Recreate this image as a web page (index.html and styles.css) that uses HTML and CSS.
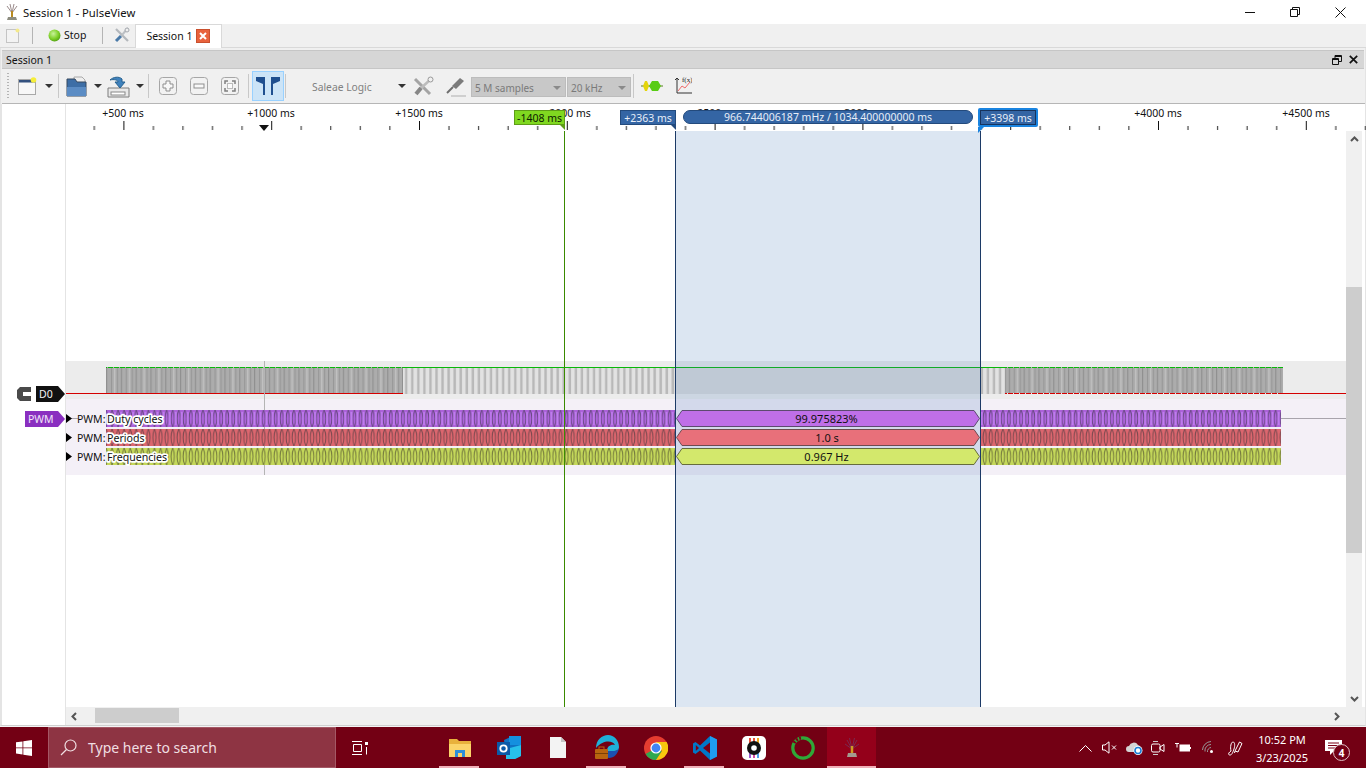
FILE: index.html
```html
<!DOCTYPE html>
<html lang="en">
<head>
<meta charset="utf-8">
<title>Session 1 - PulseView</title>
<link rel="stylesheet" href="styles.css">
</head>
<body>
<svg class="defs" width="0" height="0" aria-hidden="true">
  <defs>
    <pattern id="ticks" x="-24.4" y="0" width="147.8" height="27" patternUnits="userSpaceOnUse">
      <path d="M.5 17v9" stroke="#111" fill="none"/>
      <path d="M30 22v4M59.6 22v4M89.1 22v4M118.7 22v4" stroke="#222" fill="none"/>
    </pattern>
    <pattern id="dense" x="106" y="367" width="14.8" height="27" patternUnits="userSpaceOnUse">
      <rect width="14.8" height="27" fill="#acacac"/>
      <rect x="0" width="1.2" height="27" fill="#909090"/>
      <rect x="5" width="1" height="27" fill="#969696"/>
      <rect x="8" width="1.2" height="27" fill="#c4c4c4"/>
      <rect x="11" width="1" height="27" fill="#969696"/>
    </pattern>
    <pattern id="sparse" x="403" y="367" width="6.06" height="27" patternUnits="userSpaceOnUse">
      <rect width="6.06" height="27" fill="#e2e2e2"/>
      <rect x="2" width="2.4" height="27" fill="#b8b8b8"/>
    </pattern>
    <pattern id="topDash" x="0" y="0" width="6" height="1" patternUnits="userSpaceOnUse">
      <rect width="5" height="1" fill="#08b808"/>
    </pattern>
    <pattern id="botDash" x="0" y="0" width="6" height="1" patternUnits="userSpaceOnUse">
      <rect width="5" height="1" fill="#d40000"/>
    </pattern>
    <pattern id="annoP" x="106" y="410" width="6.06" height="17" patternUnits="userSpaceOnUse">
      <rect width="6.06" height="17" fill="#ac62da"/>
      <path d="M0 0C2.200 4 2.200 13 0 17M6.060 0C3.900 4 3.900 13 6.060 17" fill="none" stroke="#6b4a86"/>
      <path d="M2 8.500h2" stroke="#c07cf0" stroke-width="13"/>
    </pattern>
    <pattern id="annoR" x="106" y="429" width="6.06" height="17" patternUnits="userSpaceOnUse">
      <rect width="6.06" height="17" fill="#dc666e"/>
      <path d="M0 0C2.200 4 2.200 13 0 17M6.060 0C3.900 4 3.900 13 6.060 17" fill="none" stroke="#7f4a50"/>
    </pattern>
    <pattern id="annoY" x="106" y="448" width="6.06" height="17" patternUnits="userSpaceOnUse">
      <rect width="6.06" height="17" fill="#c4d85a"/>
      <path d="M0 0C2.200 4 2.200 13 0 17M6.060 0C3.900 4 3.900 13 6.060 17" fill="none" stroke="#767c3e"/>
    </pattern>
  </defs>
</svg>

<header class="titlebar">
  <svg class="app-icon" width="14" height="18" viewBox="0 0 14 18"><path d="M7 10 2 3M7 10 5 1M7 10 9 1M7 10l5-7" stroke="#9a8a8a" fill="none"/><path d="M7 8v6" stroke="#b88a20" stroke-width="2"/><path d="M3 14h8l1 3H2z" fill="#8d8d80"/></svg>
  <span class="title-text">Session 1 - PulseView</span>
  <div class="win-controls">
    <svg width="10" height="10" viewBox="0 0 10 10"><path d="M0 5.500h10" stroke="#111" fill="none"/></svg>
    <svg width="10" height="10" viewBox="0 0 10 10"><path d="M.5 2.500h7v7h-7zM2.500 2.500v-2h7v7h-2" stroke="#111" fill="none"/></svg>
    <svg width="11" height="11" viewBox="0 0 11 11"><path d="M.5.5l10 10M10.500.5l-10 10" stroke="#111" fill="none"/></svg>
  </div>
</header>

<nav class="tabbar">
  <svg class="tb-new" width="14" height="15" viewBox="0 0 14 15"><rect x=".5" y="1.500" width="12" height="13" fill="#f3f3f3" stroke="#c4c4c4"/><circle cx="11.500" cy="2.500" r="2" fill="#f4e98a"/></svg>
  <i class="tsep tsep-a"></i>
  <svg class="tb-led" width="13" height="13" viewBox="0 0 13 13"><defs><radialGradient id="led" cx=".4" cy=".35" r=".7"><stop offset="0" stop-color="#c8f29a"/><stop offset=".6" stop-color="#7fd02a"/><stop offset="1" stop-color="#4f9c12"/></radialGradient></defs><circle cx="6.500" cy="6.500" r="6" fill="url(#led)"/></svg>
  <span class="tb-stop">Stop</span>
  <i class="tsep tsep-b"></i>
  <svg class="tb-tools" width="16" height="16" viewBox="0 0 16 16"><path d="M2 2l12 12" stroke="#b4b8bc" stroke-width="2.200"/><path d="M14 1 8 8" stroke="#bcc0c4" stroke-width="2"/><path d="M7 9l-5 5" stroke="#4a7aa8" stroke-width="3"/><circle cx="13" cy="3" r="2" fill="#f0f0f0" stroke="#a4a8ae"/></svg>
  <div class="tab">
    <span>Session 1</span>
    <b class="tab-close"><svg width="8" height="8" viewBox="0 0 8 8"><path d="M1 1l6 6M7 1 1 7" stroke="#fff" stroke-width="2"/></svg></b>
  </div>
</nav>

<main class="dock">
  <div class="dock-head">
    <span>Session 1</span>
    <div class="dock-btns">
      <svg width="10" height="10" viewBox="0 0 10 10"><path d="M.5 3.500h6v6h-6zM.5 4.500h6M3 3V.5h6.500v6H7M3 1.500h6.500" stroke="#111" fill="none"/></svg>
      <svg width="9" height="9" viewBox="0 0 9 9"><path d="M.8.8l7.400 7.400M8.200.8.800 8.200" stroke="#111" stroke-width="1.700" fill="none"/></svg>
    </div>
  </div>

  <div class="toolbar">
    <i class="grip"></i>
    <svg class="t-new" width="19" height="18" viewBox="0 0 19 18"><rect x=".5" y="2.500" width="17" height="15" fill="#f7f7f7" stroke="#a8a8a8"/><rect x="1" y="3" width="16" height="2.500" fill="#33517e"/><circle cx="15.500" cy="3" r="2.800" fill="#f6ee3a"/></svg>
    <i class="caret c-a"></i>
    <i class="vsep s-a"></i>
    <svg class="t-open" width="22" height="21" viewBox="0 0 22 21"><path d="M8 1h8l3 3v6H8z" fill="#eee" stroke="#aaa"/><path d="M1 3h8l2 3h9v14H1z" fill="#3d6ea6" stroke="#36495f"/><path d="M1 11h19v9H1z" fill="#5b8cc4"/></svg>
    <i class="caret c-b"></i>
    <svg class="t-save" width="23" height="23" viewBox="0 0 23 23"><path d="M1 13h21v9H1z" fill="#e9e9e9" stroke="#7d7d7d"/><rect x="4" y="17" width="14" height="3" fill="#fff" stroke="#888"/><path d="M3 5c3-3 9-4 12-1v3h3l-5 6-5-6h3c0-2-4-3-8-2z" fill="#3f82bd" stroke="#27618f"/></svg>
    <i class="caret c-c"></i>
    <i class="vsep s-b"></i>
    <svg class="t-z z-a" width="18" height="18" viewBox="0 0 18 18"><rect x=".5" y=".5" width="17" height="17" rx="3" fill="#f2f2f2" stroke="#a6a6a6"/><path d="M7 4h4v3h3v4h-3v3H7v-3H4V7h3z" fill="#f8f8f8" stroke="#8f8f8f"/></svg>
    <svg class="t-z z-b" width="18" height="18" viewBox="0 0 18 18"><rect x=".5" y=".5" width="17" height="17" rx="3" fill="#f2f2f2" stroke="#a6a6a6"/><rect x="4" y="7" width="10" height="4" fill="#f8f8f8" stroke="#8f8f8f"/></svg>
    <svg class="t-z z-c" width="18" height="18" viewBox="0 0 18 18"><rect x=".5" y=".5" width="17" height="17" rx="3" fill="#f2f2f2" stroke="#a6a6a6"/><path d="M4 7V4h3M11 4h3v3M14 11v3h-3M7 14H4v-3" fill="none" stroke="#7f7f7f" stroke-width="1.500"/><rect x="6.500" y="6.500" width="5" height="5" fill="#fbfbfb" stroke="#bbb"/></svg>
    <i class="vsep s-c"></i>
    <div class="cursor-btn"><svg width="26" height="20" viewBox="0 0 26 20"><path d="M1 1h9v18H8V8L1 5zM25 1h-9v18h2V8l7-3z" fill="#1f4f8f"/></svg></div>
    <i class="vsep s-d"></i>
    <span class="device">Saleae Logic</span>
    <i class="caret c-d"></i>
    <svg class="t-wrench" width="21" height="21" viewBox="0 0 21 21"><path d="M2 3l15 15" stroke="#a4a4a4" stroke-width="3"/><path d="M19 2 6 14" stroke="#bcbcbc" stroke-width="2.500"/><path d="M8 12l-5 6" stroke="#868686" stroke-width="4"/><circle cx="17.500" cy="3.500" r="2.500" fill="#f0f0f0" stroke="#999"/></svg>
    <svg class="t-probe" width="20" height="21" viewBox="0 0 20 21"><path d="M1 17l6-6" stroke="#6e6e6e" stroke-width="2"/><path d="M6 10l8-8 4 3-8 8z" fill="#7b7b7b"/><path d="M5 20h15" stroke="#cfcfcf" stroke-width="2"/></svg>
    <div class="combo c-samples"><span>5 M samples</span><i class="c-caret"></i></div>
    <div class="combo c-rate"><span>20 kHz</span><i class="c-caret"></i></div>
    <i class="vsep s-e"></i>
    <svg class="t-dec" width="22" height="12" viewBox="0 0 22 12"><path d="M0 6h22" stroke="#5a7a20"/><path d="M2 6l2-5h2l2 5-2 5H4z" fill="#e4d40c"/><path d="M8 6l3-5h6l3 5-3 5h-6z" fill="#58cc14"/></svg>
    <svg class="t-math" width="18" height="18" viewBox="0 0 18 18"><path d="M3 1v15h15" fill="none" stroke="#333"/><path d="M1 3l2-2 2 2" fill="none" stroke="#333"/><path d="M4 14l4-5 3 2 5-6" fill="none" stroke="#ef6a6a"/><text x="8" y="5" class="math-t">f(x)</text></svg>
  </div>

  <div class="view">
    <aside class="gutter">
      <svg class="ch-c" width="14" height="14" viewBox="0 0 14 14"><path d="M3 0h11v5H6v4h8v5H3l-3-3V3z" fill="#4a4a4a"/></svg>
      <div class="ch-label ch-d0">D0</div>
      <div class="ch-label ch-pwm">PWM</div>
    </aside>
    <section class="canvas">
      <div class="ruler">
        <svg class="ruler-ticks" width="1300" height="27" viewBox="66 0 1300 27"><rect x="66" width="1300" height="27" fill="url(#ticks)"/></svg>
        <span class="rl rl-500">+500 ms</span>
        <span class="rl rl-1000">+1000 ms</span>
        <span class="rl rl-1500">+1500 ms</span>
        <span class="rl rl-2000">+2000 ms</span>
        <span class="rl rl-2500">+2500 ms</span>
        <span class="rl rl-3000">+3000 ms</span>
        <span class="rl rl-4000">+4000 ms</span>
        <span class="rl rl-4500">+4500 ms</span>
        <i class="trig"></i>
        <div class="flag flag-green">-1408 ms</div>
        <div class="flag flag-blue">+2363 ms</div>
        <div class="pill">966.744006187 mHz / 1034.400000000 ms</div>
        <div class="flag flag-sel"><span>+3398 ms</span></div>
      </div>
      <div class="viewport">
        <svg class="traces" width="1280" height="576" viewBox="66 131 1280 576">
          <rect x="66" y="361" width="1280" height="38" fill="#ececec"/>
          <rect x="66" y="399" width="1280" height="76" fill="#f4f0f7"/>
          <rect x="66" y="393" width="337" height="1" fill="#d40000"/>
          <rect x="1005" y="393" width="341" height="1" fill="#d40000"/>
          <rect x="106" y="367" width="297" height="26" fill="url(#dense)"/>
          <rect x="403" y="367" width="273" height="27" fill="url(#sparse)"/>
          <rect x="676" y="367" width="304" height="27" fill="#dcdcdc"/>
          <rect x="981" y="367" width="24" height="27" fill="url(#sparse)"/>
          <rect x="1005" y="367" width="278" height="26" fill="url(#dense)"/>
          <rect x="106" y="367" width="297" height="1" fill="url(#topDash)"/>
          <rect x="403" y="367" width="603" height="1" fill="#08b808"/>
          <rect x="1006" y="367" width="277" height="1" fill="url(#topDash)"/>
          <rect x="1005" y="393" width="278" height="1" fill="#e8e8e8"/>
          <rect x="1005" y="393" width="278" height="1" fill="url(#botDash)"/>
          <path d="M66 418.500h12M1281 418.500h65" stroke="#a8a4ac" fill="none"/>
          <path d="M264.500 361v114" stroke="#b4b4b4" fill="none"/>
          <rect x="106" y="410" width="570" height="17" fill="url(#annoP)"/>
          <rect x="981" y="410" width="300" height="17" fill="url(#annoP)"/>
          <rect x="106" y="429" width="570" height="17" fill="url(#annoR)"/>
          <rect x="981" y="429" width="300" height="17" fill="url(#annoR)"/>
          <rect x="106" y="448" width="570" height="17" fill="url(#annoY)"/>
          <rect x="981" y="448" width="300" height="17" fill="url(#annoY)"/>
          <rect x="676" y="131" width="304" height="576" fill="#3d75b7" fill-opacity=".18"/>
          <path d="M676.500 418.500 682 410.500H974L979.500 418.500 974 426.500H682z" fill="#bf6fe8" stroke="#5c4a70"/>
          <path d="M676.500 437.500 682 429.500H974L979.500 437.500 974 445.500H682z" fill="#e8707a" stroke="#6e4a50"/>
          <path d="M676.500 456.500 682 448.500H974L979.500 456.500 974 464.500H682z" fill="#d3e86c" stroke="#666c3c"/>
          <path d="M564.500 131v576" stroke="#3a8a00" fill="none"/>
          <path d="M675.500 131v576M980.500 131v576" stroke="#1c3a66" fill="none"/>
          <path d="M66 414l6 4.500-6 4.500zM66 433l6 4.500-6 4.500zM66 452l6 4.500-6 4.500z" fill="#000"/>
          <text class="a-name" x="77" y="423">PWM:</text>
          <text class="a-name" x="77" y="442">PWM:</text>
          <text class="a-name" x="77" y="461">PWM:</text>
          <text class="a-row" x="107" y="423">Duty cycles</text>
          <text class="a-row" x="107" y="442">Periods</text>
          <text class="a-row" x="107" y="461">Frequencies</text>
          <text class="a-val" x="826.500" y="423">99.975823%</text>
          <text class="a-val" x="827" y="442">1.0 s</text>
          <text class="a-val" x="826.500" y="461">0.967 Hz</text>
        </svg>
        <div class="vscroll">
          <svg class="sb-up" width="9" height="6" viewBox="0 0 9 6"><path d="M1 5l3.500-3.500L8 5" fill="none" stroke="#555" stroke-width="2"/></svg>
          <i class="vthumb"></i>
          <svg class="sb-down" width="9" height="6" viewBox="0 0 9 6"><path d="M1 1l3.500 3.500L8 1" fill="none" stroke="#555" stroke-width="2"/></svg>
        </div>
      </div>
      <div class="hscroll">
        <svg class="sb-left" width="6" height="9" viewBox="0 0 6 9"><path d="M5 1 1.500 4.500 5 8" fill="none" stroke="#555" stroke-width="2"/></svg>
        <i class="hthumb"></i>
        <svg class="sb-right" width="6" height="9" viewBox="0 0 6 9"><path d="M1 1l3.500 3.500L1 8" fill="none" stroke="#555" stroke-width="2"/></svg>
      </div>
    </section>
  </div>
</main>

<footer class="taskbar">
  <div class="start"><svg width="16" height="16" viewBox="0 0 16 16"><path d="M0 2.300 6.500 1.400v6.100H0zM7.300 1.300 16 0v7.500H7.300zM0 8.300h6.500v6.200L0 13.600zM7.300 8.300H16V16l-8.700-1.300z" fill="#fff"/></svg></div>
  <div class="search">
    <svg width="17" height="17" viewBox="0 0 17 17"><circle cx="10.500" cy="6.500" r="5.500" fill="none" stroke="#f0dfe2" stroke-width="1.200"/><path d="M6.500 10.500 1 16" stroke="#f0dfe2" stroke-width="1.200"/></svg>
    <span>Type here to search</span>
  </div>
  <div class="taskview"><svg width="16" height="14" viewBox="0 0 16 14"><path d="M0 .5h10M0 13.500h10M1.500 3.500h8v7h-8z" fill="none" stroke="#fff"/><path d="M13 1h3v3h-3z" fill="#fff"/><path d="M14.500 6v7.500" stroke="#fff"/></svg></div>
  <div class="apps">
    <div class="app run"><svg width="22" height="22" viewBox="0 0 22 22"><path d="M0 2h8l2 2h12v16H0z" fill="#e8b13c"/><path d="M0 7h22v13H0z" fill="#fbd46a"/><path d="M6 20v-7h10v7h-3v-4H9v4z" fill="#2e8fd8"/></svg></div>
    <div class="app"><svg width="24" height="24" viewBox="0 0 24 24"><path d="M7 4 16 0l8 4v16l-6 3H10z" fill="#0e72c4"/><path d="M12 0h12v9H12z" fill="#1490df"/><path d="M9 13l15-4v11l-6 3H9z" fill="#28c0ea"/><rect y="6" width="13" height="13" fill="#0a5aa8"/><circle cx="6.500" cy="12.500" r="3.200" fill="none" stroke="#fff" stroke-width="1.800"/></svg></div>
    <div class="app"><svg width="16" height="21" viewBox="0 0 16 21"><path d="M0 0h11l5 5v16H0z" fill="#f3f3f3"/><path d="M11 0v5h5z" fill="#c4c4c4"/></svg></div>
    <div class="app run"><svg width="25" height="25" viewBox="0 0 25 25"><path d="M2 13C2 5 8 0 14 0c6 0 11 5 11 12 0 3-2 4-5 4h-7c0-5 4-7 8-6-2-4-11-6-19 3z" fill="#1fb0d8"/><path d="M13 16h7c2 0 4-1 5-3-1 6-5 10-10 10-2 0-2-3-2-7z" fill="#1d50b0"/><rect x="1" y="14" width="13" height="10" rx="1" fill="#b8650f"/><rect x="5" y="12" width="5" height="3" fill="none" stroke="#b8650f"/><path d="M1 18.500h13" stroke="#7a3f06"/></svg></div>
    <div class="app"><svg width="24" height="24" viewBox="0 0 24 24"><circle cx="12" cy="12" r="12" fill="#e53c30"/><path d="M12 12 1.600 18A12 12 0 0 0 12 24l6-9z" fill="#2fa84f"/><path d="M12 6h10.600A12 12 0 0 1 12 24l6-9z" fill="#f8c80e"/><circle cx="12" cy="12" r="5.600" fill="#fff"/><circle cx="12" cy="12" r="4.400" fill="#4285f4"/></svg></div>
    <div class="app run"><svg width="24" height="24" viewBox="0 0 24 24"><path d="M17 0l7 3.500v17L17 24 7 14.500 2.500 18 0 16.500V7.500L2.500 6 7 9.500z" fill="#0078c8"/><path d="M17 0l7 3.500v17L17 24z" fill="#1f9cf0"/><path d="M2.800 9 6 12l-3.200 3z" fill="#7a0016"/><path d="M17 6.500 10 12l7 5.500z" fill="#7a0016"/></svg></div>
    <div class="app"><svg width="24" height="24" viewBox="0 0 24 24"><rect width="24" height="24" rx="5" fill="#fff"/><path d="M8 2v5M12 2v5" stroke="#e8503a" stroke-width="2"/><path d="M16 2v5" stroke="#f2a81c" stroke-width="2"/><path d="M8 17v5" stroke="#9b59d0" stroke-width="2"/><path d="M12 17v5" stroke="#d84ca0" stroke-width="2"/><path d="M16 17v5" stroke="#4f9ee8" stroke-width="2"/><circle cx="12" cy="12" r="7" fill="#111"/><circle cx="12" cy="12" r="2.800" fill="#fff"/></svg></div>
    <div class="app"><svg width="24" height="24" viewBox="0 0 24 24"><circle cx="12" cy="12" r="10.200" fill="none" stroke="#2fa838" stroke-width="3.200"/><path d="M3 7A10 10 0 0 1 10 2" fill="none" stroke="#7a0016" stroke-width="3.200" stroke-dasharray="2 1.500"/></svg></div>
    <div class="app active"><svg width="14" height="20" viewBox="0 0 14 20"><path d="M7 11 2 2M7 11 4.500 0M7 11 9.500 0M7 11l5-9M7 11 0 6M7 11l7-5" stroke="#7a2a50" fill="none"/><path d="M7 8v7" stroke="#d09a20" stroke-width="2.500"/><path d="M3 15h8l1 4H2z" fill="#a39b8f"/></svg></div>
  </div>
  <div class="tray">
    <svg class="tr tr-chev" width="13" height="8" viewBox="0 0 13 8"><path d="M.5 7.500 6.500 1.500l6 6" fill="none" stroke="#fff"/></svg>
    <svg class="tr tr-spk" width="15" height="13" viewBox="0 0 15 13"><path d="M.5 4h2.500L7 .8v11.400L3 9H.5zM10 4.500l4 4M14 4.500l-4 4" fill="none" stroke="#fff"/></svg>
    <svg class="tr tr-cloud" width="17" height="14" viewBox="0 0 17 14"><path d="M3 11a3 3 0 0 1 0-6 5 5 0 0 1 9-1 4 4 0 0 1 3 5v2z" fill="#d4d4d4"/><circle cx="12" cy="9.500" r="4.500" fill="#fff"/><circle cx="12" cy="9.500" r="3" fill="none" stroke="#1a7ed4" stroke-width="1.600"/></svg>
    <svg class="tr tr-cam" width="15" height="18" viewBox="0 0 15 18"><rect x=".5" y="5" width="8.500" height="8" rx="1.500" fill="none" stroke="#fff"/><path d="M9 8l4-2.500v7L9 10z" fill="none" stroke="#fff"/><path d="M2 2.500h5M2 15.500h5" stroke="#ccc"/></svg>
    <svg class="tr tr-bat" width="16" height="11" viewBox="0 0 16 11"><path d="M0 1.500h4M2 1.500v4" stroke="#fff"/><rect x="4.500" y="2.500" width="10.500" height="7" fill="#fff"/><path d="M15.500 5v2" stroke="#fff"/></svg>
    <svg class="tr tr-wifi" width="14" height="13" viewBox="0 0 14 13"><path d="M.5 9A9 9 0 0 1 9 .5M3 10.500A6 6 0 0 1 9 3.500M5.500 11A4 4 0 0 1 9 6.500" fill="none" stroke="#999"/><circle cx="9.500" cy="10.500" r="1.500" fill="#fff"/></svg>
    <svg class="tr tr-pen" width="16" height="16" viewBox="0 0 16 16"><path d="M8 11 12.500 2l2.500 1.500L11 12zM8 11l-.5 2" fill="none" stroke="#fff"/><path d="M4 11C1 13 1 15 3 15s3-3 4-6c1-3 1-7-1-7s-3 5-2 9" fill="none" stroke="#fff"/></svg>
  </div>
  <div class="clock"><span>10:52 PM</span><span>3/23/2025</span></div>
  <div class="notify">
    <svg width="17" height="15" viewBox="0 0 17 15"><path d="M0 0h17v11H9l-4 4v-4H0z" fill="#fff"/><path d="M3 3h11M3 5.500h11M3 8h7" stroke="#7a0016"/></svg>
    <b class="badge">4</b>
  </div>
</footer>
</body>
</html>
```
FILE: styles.css
```css
* { box-sizing: border-box; }
html, body { margin: 0; height: 100%; }
body {
  width: 1366px;
  height: 768px;
  overflow: hidden;
  display: flex;
  flex-direction: column;
  background: #fff;
  font-family: "Noto Sans", "Open Sans", sans-serif;
  font-size: 10.5px;
  color: #111;
}
i { display: block; }
.defs { position: absolute; }

/* title bar */
.titlebar { height: 24px; flex: none; display: flex; align-items: center; background: #fff; padding-left: 5px; }
.app-icon { margin-right: 4px; }
.title-text { font-size: 11.3px; color: #111; }
.win-controls { margin-left: auto; display: flex; align-items: center; gap: 35px; padding-right: 20px; }

/* tab bar */
.tabbar { height: 24px; flex: none; display: flex; align-items: center; background: #f0f0f0; border-bottom: 1px solid #d9d9d9; padding: 0 0 1px 6px; }
.tsep { width: 1px; height: 17px; background: #b4b4b4; }
.tsep-a { margin-left: 12px; }
.tb-led { margin-left: 15px; }
.tb-stop { margin-left: 3px; }
.tsep-b { margin-left: 16px; }
.tb-tools { margin-left: 11px; }
.tab { margin-left: 5px; width: 87px; height: 24px; align-self: flex-start; background: #fff; border: 1px solid #d9d9d9; border-bottom: 0; display: flex; align-items: center; padding: 0 0 1px 10px; }
.tab-close { margin-left: 4px; width: 14px; height: 14px; background: #e8623c; border: 1px solid #c9502e; display: flex; align-items: center; justify-content: center; }

/* dock */
.dock { height: 678px; flex: none; display: flex; flex-direction: column; padding: 2px 2px 0; background: #f0f0f0; border-left: 1px solid #e4e4e4; border-right: 1px solid #e4e4e4; border-bottom: 1px solid #d0d0d0; }
.dock-head { height: 19px; flex: none; display: flex; align-items: center; justify-content: space-between; background: #d6d6d6; border: 1px solid #c6c6c6; border-width: 1px 0; padding: 0 6px 0 4px; margin-left: -1px; margin-right: -1px; }
.dock-btns { display: flex; align-items: center; gap: 7px; }

/* toolbar */
.toolbar { height: 35px; flex: none; display: flex; align-items: center; padding-left: 5px; border-bottom: 1px solid #b6b6b6; margin: 0 -2px 0 -1px; background: #f0f0f0; }
.grip { width: 2px; height: 26px; background: repeating-linear-gradient(#b4b4b4 0 1px, transparent 1px 3px); }
.caret { width: 0; height: 0; border: 4px solid transparent; border-top: 4px solid #333; border-bottom: 0; }
.vsep { width: 1px; height: 24px; background: #c8c8c8; }
.t-new { margin-left: 9px; }
.c-a { margin-left: 8px; }
.s-a { margin-left: 5px; }
.t-open { margin-left: 7px; }
.c-b { margin-left: 6px; }
.t-save { margin-left: 5px; }
.c-c { margin-left: 6px; }
.s-b { margin-left: 4px; }
.z-a { margin-left: 10px; }
.z-b, .z-c { margin-left: 13px; }
.s-c { margin-left: 9px; }
.cursor-btn { margin-left: 3px; width: 32px; height: 30px; background: #cce4f7; border: 1px solid #99d1ff; display: flex; align-items: center; justify-content: center; }
.s-d { margin-left: 1px; }
.device { margin-left: 26px; width: 82px; padding-top: 2px; color: #808080; font-size: 10.3px; }
.c-d { margin-left: 4px; }
.t-wrench { margin-left: 7px; }
.t-probe { margin-left: 12px; }
.combo { height: 20px; margin-top: 2px; padding: 1px 4px 0 3px; background: #c8c8c8; border: 1px solid #bcbcbc; color: #7a7a7a; display: flex; align-items: center; justify-content: space-between; font-size: 10px; }
.c-samples { margin-left: 5px; width: 95px; }
.c-rate { margin-left: 1px; width: 64px; }
.c-caret { width: 0; height: 0; border: 4px solid transparent; border-top: 4px solid #8a8a8a; border-bottom: 0; }
.s-e { margin-left: 2px; }
.t-dec { margin-left: 7px; }
.t-math { margin-left: 11px; }
.math-t { font: 7px "Liberation Serif", serif; fill: #222; }

/* main view */
.view { flex: 1; min-height: 0; display: flex; margin: 0 -2px 0 -1px; background: #fff; }
.gutter { width: 65px; flex: none; position: relative; background: #fff; border-left: 1px solid #e4e4e4; border-right: 1px solid #e4e4e4; margin-left: -1px; }
.ch-c { position: absolute; left: 15px; top: 283px; }
.ch-label { position: absolute; display: flex; align-items: center; height: 16px; clip-path: polygon(0 0, calc(100% - 7px) 0, 100% 50%, calc(100% - 7px) 100%, 0 100%); }
.ch-d0 { left: 34px; top: 282px; width: 29px; background: #111; color: #f4f4f4; padding-left: 3px; }
.ch-pwm { left: 23px; top: 307px; width: 40px; background: #8a2fc0; color: #f0e4f8; padding-left: 3px; }
.canvas { flex: 1; min-width: 0; display: flex; flex-direction: column; position: relative; }
.ruler { height: 27px; flex: none; position: relative; background: #fff; }
.ruler-ticks { position: absolute; left: 0; top: 0; }
.rl { position: absolute; top: 1px; transform: translateX(-50%); line-height: 16px; white-space: nowrap; color: #111; }
.rl-500 { left: 57px; }
.rl-1000 { left: 205px; }
.rl-1500 { left: 353px; }
.rl-2000 { left: 501px; }
.rl-2500 { left: 649px; }
.rl-3000 { left: 796px; }
.rl-4000 { left: 1092px; }
.rl-4500 { left: 1240px; }
.trig { position: absolute; left: 193px; top: 21px; width: 0; height: 0; border: 5px solid transparent; border-top: 6px solid #111; border-bottom: 0; }
.flag { position: absolute; top: 6px; height: 15px; display: flex; align-items: center; justify-content: center; white-space: nowrap; }
.flag::after { content: ""; position: absolute; bottom: -6px; width: 6px; height: 6px; }
.flag-green { left: 448px; width: 51px; background: #80d820; border: 1px solid #5e9c18; color: #0c2200; }
.flag-green::after { right: -1px; background: #5e9c18; clip-path: polygon(0 0, 100% 0, 100% 100%); }
.flag-blue { left: 554px; width: 56px; background: #3465a4; border: 1px solid #234a7c; color: #e8eef8; }
.flag-blue::after { right: -1px; background: #234a7c; clip-path: polygon(0 0, 100% 0, 100% 100%); }
.pill { position: absolute; left: 617px; top: 6px; width: 290px; height: 14px; border-radius: 7px; background: #3465a4; border: 1px solid #234a7c; color: #e8eef8; display: flex; align-items: center; justify-content: center; white-space: nowrap; }
.flag-sel { left: 912px; top: 4px; width: 60px; height: 19px; background: #1a84e0; border-radius: 2px; color: #e8eef8; padding: 2px; }
.flag-sel span { display: flex; width: 100%; height: 100%; align-items: center; justify-content: center; background: #3465a4; border: 1px solid #17335c; }
.flag-sel::after { left: 0; background: #1a84e0; clip-path: polygon(0 0, 100% 0, 0 100%); }
.viewport { flex: 1; min-height: 0; display: flex; position: relative; }
.traces { flex: none; display: block; }
.a-name { font: 10.5px "Noto Sans", sans-serif; fill: #111; }
.a-row { font: 10.6px "Noto Sans", sans-serif; fill: #111; stroke: #fff; stroke-width: 3.5px; paint-order: stroke; stroke-linejoin: round; }
.a-val { font: 11px "Noto Sans", sans-serif; fill: #111; text-anchor: middle; }
.vscroll { width: 16px; flex: none; position: relative; background: #f0f0f0; display: flex; flex-direction: column; align-items: center; }
.sb-up { margin-top: 5px; }
.vthumb { position: absolute; top: 156px; left: 0; width: 16px; height: 266px; background: #cdcdcd; }
.sb-down { margin-top: auto; margin-bottom: 5px; }
.hscroll { height: 18px; flex: none; display: flex; align-items: center; position: relative; background: #f0f0f0; padding: 0 25px 0 5px; }
.hthumb { position: absolute; left: 29px; top: 1px; width: 84px; height: 15px; background: #cdcdcd; }
.sb-right { margin-left: auto; }

/* taskbar */
.taskbar { height: 42px; flex: none; display: flex; align-items: center; background: #730014; color: #fff; border-top: 1px solid #f4f4f4; }
.start { width: 48px; display: flex; justify-content: center; }
.search { width: 288px; height: 41px; display: flex; align-items: center; background: #8e3443; border: 1px solid #a45865; padding-left: 11px; color: #f0dfe2; font-size: 14px; }
.search span { margin-left: 11px; }
.taskview { width: 65px; display: flex; justify-content: center; padding-right: 33px; margin-left: 8px; }
.apps { display: flex; height: 41px; }
.app { width: 49px; display: flex; align-items: center; justify-content: center; position: relative; }
.apps .app:first-child { margin-left: 26px; }
.app.run::after { content: ""; position: absolute; left: 4px; right: 5px; bottom: 0; height: 2px; background: #f0b0b8; }
.app.active { background: #94001a; }
.app.active::after { content: ""; position: absolute; left: 0; right: 0; bottom: 0; height: 2px; background: #f0b0b8; }
.tray { margin-left: 203px; width: 166px; height: 41px; display: flex; align-items: center; }
.tr { flex: none; }
.tr-spk { margin-left: 10px; }
.tr-cloud { margin-left: 9px; }
.tr-cam { margin-left: 8px; }
.tr-bat { margin-left: 9px; }
.tr-wifi { margin-left: 11px; }
.tr-pen { margin-left: 11px; }
.clock { width: 76px; display: flex; flex-direction: column; align-items: center; font-size: 11px; line-height: 18px; margin: 2px 0 0 -1px; }
.notify { position: relative; width: 40px; display: flex; justify-content: center; margin-left: -7px; }
.badge { position: absolute; left: 20px; top: 4px; width: 17px; height: 17px; border-radius: 50%; background: #730014; border: 1px solid #e0c0c6; color: #fff; font-size: 10px; font-weight: 700; display: flex; align-items: center; justify-content: center; }
```
